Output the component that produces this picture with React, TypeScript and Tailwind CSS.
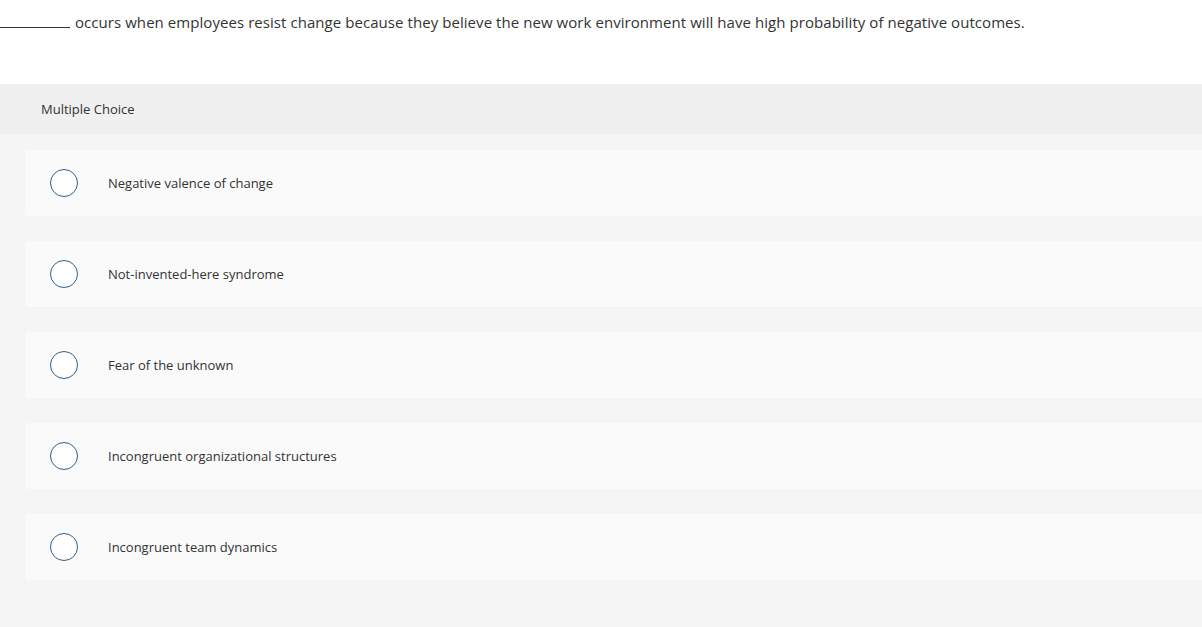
import React from "react";

const options = [
  "Negative valence of change",
  "Not-invented-here syndrome",
  "Fear of the unknown",
  "Incongruent organizational structures",
  "Incongruent team dynamics",
];

export default function App() {
  return (
    <div
      className="w-[1202px] h-[627px] overflow-hidden bg-white text-[#333]"
      style={{ fontFamily: '"Open Sans", "Liberation Sans", Arial, sans-serif' }}
    >
      <div className="h-[84px] pt-[12px]">
        <p className="text-[15px] leading-[20px] tracking-[0.06px] flex items-end">
          <span className="inline-block w-[70px] border-b border-[#333] h-[15px] mr-[5px] mb-[4px]"></span>
          <span>
            occurs when employees resist change because they believe the new work environment will have high probability of negative outcomes.
          </span>
        </p>
      </div>
      <div className="h-[50px] bg-[#f0f0f0] flex items-center pl-[41px] text-[13px] text-[#333] pt-[1px]">
        Multiple Choice
      </div>
      <div className="bg-[#f5f5f5] h-[493px] pt-[16px] flex flex-col gap-[25px] pl-[25px]">
        {options.map((o) => (
          <div
            key={o}
            className="h-[66px] bg-[#fafafa] rounded-l-[4px] flex items-center"
          >
            <div className="ml-[25px] w-[28px] h-[28px] rounded-full border-[1.5px] border-[#2f5f8f] bg-white shrink-0"></div>
            <span className="ml-[30px] text-[13px] text-[#333] pt-[1px]">{o}</span>
          </div>
        ))}
      </div>
    </div>
  );
}
